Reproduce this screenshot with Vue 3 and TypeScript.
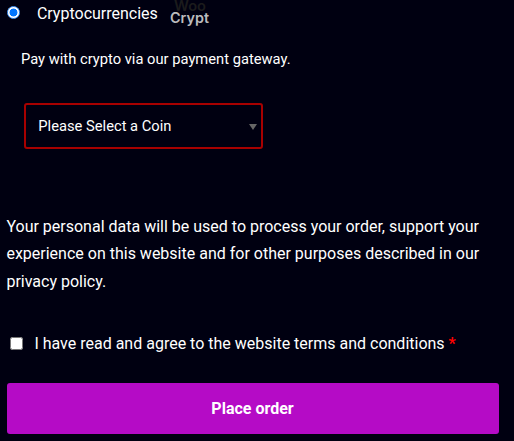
<script setup lang="ts">
import { ref } from 'vue'

const method = ref<string>('crypto')
const accepted = ref<boolean>(false)
</script>

<template>
  <form class="checkout" @submit.prevent>
    <label class="method">
      <input v-model="method" type="radio" name="payment" value="crypto" class="control radio" />
      <span class="method-name">Cryptocurrencies</span>
      <svg class="logo" width="46" height="28" viewBox="0 0 46 28" role="img" aria-label="Woo Crypt">
        <text class="logo-woo" x="4" y="11.4" textLength="32" lengthAdjust="spacingAndGlyphs">Woo</text>
        <text class="logo-crypt" x="0" y="23" textLength="39" lengthAdjust="spacingAndGlyphs">Crypt</text>
      </svg>
    </label>
    <p class="description">Pay with crypto via our payment gateway.</p>
    <button type="button" class="coin">
      <span>Please Select a Coin</span>
      <svg class="arrow" width="8" height="6" viewBox="0 0 8 6"><path d="M0 0H8L4 6Z" fill="#666" /></svg>
    </button>
    <p class="privacy">
      Your personal data will be used to process your order, support your experience on this website and for other purposes described in our privacy policy.
    </p>
    <label class="terms">
      <input v-model="accepted" type="checkbox" class="control" />
      <span class="terms-text">I have read and agree to the website terms and conditions <span class="required">*</span></span>
    </label>
    <button type="submit" class="submit">Place order</button>
  </form>
</template>

<style>
body {
  background: #000011;
}
</style>

<style scoped>
.checkout {
  box-sizing: border-box;
  width: 514px;
  height: 441px;
  padding: 0 15px 0 7px;
  overflow: hidden;
  background: #000011;
  color: #fff;
  font: 16px/27.2px Roboto, sans-serif;
}
.method {
  display: flex;
  align-items: flex-start;
  height: 28px;
}
.control {
  flex: none;
  width: 13px;
  height: 13px;
  margin: 0;
}
.radio {
  box-sizing: border-box;
  margin-top: 6px;
  appearance: none;
  border: 1px solid #4b9cff;
  border-radius: 50%;
  background: radial-gradient(circle, #0075ff 3.6px, #fff 4.3px);
}
.method-name {
  margin-left: 16.9px;
}
.logo {
  margin-left: 11.7px;
  font-family: Inter, sans-serif;
  font-weight: 600;
}
.logo-woo {
  font-size: 14px;
  fill: #1b1b1c;
}
.logo-crypt {
  font-size: 14px;
  fill: #bcbcbe;
}
.description {
  margin: 18px 0 0 14px;
  font-size: 14.72px;
  line-height: 26px;
}
.coin {
  display: flex;
  align-items: center;
  justify-content: space-between;
  box-sizing: border-box;
  width: 239px;
  height: 46px;
  margin: 31px 0 0 17px;
  padding: 0 4px 0 12.3px;
  border: 2px solid #a70000;
  border-radius: 3px;
  background: transparent;
  color: #fff;
  font: 14.72px/26px Roboto, sans-serif;
}
.arrow {
  margin-top: 2px;
}
.privacy {
  margin: 64.2px 0 0 -0.6px;
  line-height: 27.2px;
}
.terms {
  display: flex;
  align-items: center;
  margin: 34.8px 0 0 3px;
}
.terms-text {
  margin-left: 11.4px;
}
.required {
  color: #f00;
  font-weight: 700;
}
.submit {
  display: block;
  width: 100%;
  height: 51px;
  margin: 26px 0 0;
  padding: 0 1px 0 0;
  border: 0;
  border-radius: 3px;
  background: #b50bc6;
  color: #fff;
  font: 700 16px/51px Roboto, sans-serif;
}
</style>
